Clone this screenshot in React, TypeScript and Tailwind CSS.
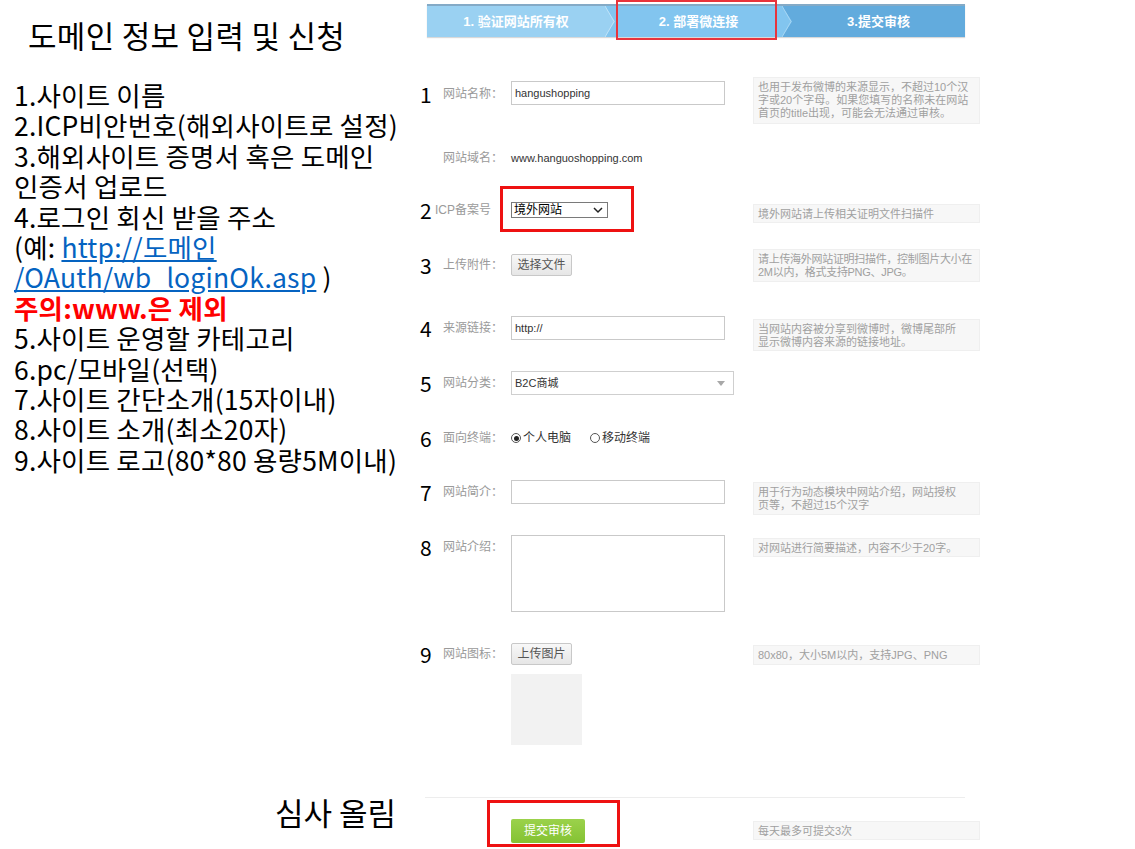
import React from 'react';

const kr = { fontFamily: '"Noto Sans CJK KR", "Noto Sans", sans-serif' };
const cn = { fontFamily: 'Arial, "Liberation Sans", "Noto Sans CJK SC", sans-serif' };

const Hint: React.FC<{ children: React.ReactNode; className?: string }> = ({ children, className = '' }) => (
  <div
    className={`w-[227px] bg-[#f7f7f7] border border-[#efefef] px-[4px] py-[3px] text-[11px] leading-[13px] text-[#a0a0a0] whitespace-nowrap overflow-hidden ${className}`}
    style={cn}
  >
    {children}
  </div>
);

const Label: React.FC<{ num?: string; text: string; h: string; narrow?: boolean }> = ({ num, text, h, narrow }) => (
  <div className={`w-[91px] flex items-center ${h}`}>
    <span className={`${narrow ? 'w-[15px]' : 'w-[23px]'} text-[21px] leading-none text-black`} style={kr}>
      {num}
    </span>
    <span className="text-[12px] text-[#9a9a9a] whitespace-nowrap" style={cn}>
      {text}
    </span>
  </div>
);

const GrayButton: React.FC<{ text: string }> = ({ text }) => (
  <div
    className="w-[61px] h-[22px] flex items-center justify-center rounded-[2px] border border-[#c8c8c8] bg-gradient-to-b from-[#f8f8f8] to-[#e6e6e6] text-[12px] text-[#555]"
    style={cn}
  >
    {text}
  </div>
);

const Steps = () => (
  <div className="relative ml-[7px] mt-[4px] w-[538px] h-[33px] flex border-t-2 border-[#84aac6] shadow-[0_1px_1px_rgba(0,0,0,0.15)] text-white text-[13px] font-semibold" style={cn}>
    <div className="w-[178px] flex items-center justify-center bg-[#9ad1f2]">1. 验证网站所有权</div>
    <svg width="10" height="31" viewBox="0 0 10 31" className="bg-[#82c5ef]">
      <polygon points="0,0 10,15.5 0,31" fill="#9ad1f2" />
      <polyline points="0,0 9,15.5 0,31" fill="none" stroke="#bfe3f8" strokeWidth="1" />
    </svg>
    <div className="w-[167px] flex items-center justify-center bg-[#82c5ef]">2. 部署微连接</div>
    <svg width="10" height="31" viewBox="0 0 10 31" className="bg-[#62abdd]">
      <polygon points="0,0 10,15.5 0,31" fill="#82c5ef" />
      <polyline points="0,0 9,15.5 0,31" fill="none" stroke="#a6d6f3" strokeWidth="1" />
    </svg>
    <div className="flex-1 flex items-center justify-center bg-[#62abdd]">3.提交审核</div>
    <div className="absolute left-[189px] top-[-6px] w-[161px] h-[40px] border-2 border-[#e8343c]" />
  </div>
);

export default function App() {
  const lines: React.ReactNode[] = [
    '1.사이트 이름',
    '2.ICP비안번호(해외사이트로 설정)',
    '3.해외사이트 증명서 혹은 도메인',
    '인증서 업로드',
    '4.로그인 회신 받을 주소',
    <>
      (예: <span className="text-[#0563c1] underline">http://도메인</span>
    </>,
    <>
      <span className="text-[#0563c1] underline">/OAuth/wb_loginOk.asp</span> )
    </>,
    <span className="text-[#ff0000] font-bold">주의:www.은 제외</span>,
    '5.사이트 운영할 카테고리',
    '6.pc/모바일(선택)',
    '7.사이트 간단소개(15자이내)',
    '8.사이트 소개(최소20자)',
    '9.사이트 로고(80*80 용량5M이내)',
  ];

  return (
    <div className="w-[1135px] h-[849px] bg-white flex overflow-hidden">
      {/* left notes */}
      <div className="w-[420px] shrink-0 text-black" style={kr}>
        <div className="pl-[28px] pt-[18px] text-[31px] leading-[34px] tracking-[0.3px]">도메인 정보 입력 및 신청</div>
        <div className="pl-[14px] mt-[28px] text-[26.5px] leading-[30.4px] tracking-[0.2px]">
          {lines.map((l, i) => (
            <div key={i} className="whitespace-nowrap">{l}</div>
          ))}
        </div>
        <div className="pl-[275px] mt-[320px] text-[31px] leading-[34px]">심사 올림</div>
      </div>

      {/* right form */}
      <div className="flex-1 flex flex-col">
        <Steps />

        {/* 1 */}
        <div className="flex items-start mt-[40px] h-[47px]">
          <div className="mt-[5px]"><Label num="1" text="网站名称：" h="h-[24px]" /></div>
          <div className="w-[242px] mt-[4px]">
            <div className="w-[214px] h-[24px] border border-[#c9c9c9] px-[3px] flex items-center text-[11px] text-[#333]" style={cn}>hangushopping</div>
          </div>
          <Hint className="h-[47px]">
            也用于发布微博的来源显示，不超过10个汉<br />字或20个字母。如果您填写的名称未在网站<br />首页的title出现，可能会无法通过审核。
          </Hint>
        </div>

        {/* domain */}
        <div className="flex items-center mt-[22px] h-[24px]">
          <Label text="网站域名：" h="h-[24px]" />
          <div className="text-[11px] text-[#333]" style={cn}>www.hanguoshopping.com</div>
        </div>

        {/* 2 */}
        <div className="flex items-start mt-[32px] h-[20px]">
          <Label num="2" text="ICP备案号" h="h-[16px]" narrow />
          <div className="w-[242px] relative">
            <div className="w-[97px] h-[16px] border border-[#7a7a7a] flex items-center justify-between pl-[2px] pr-[4px] text-[12px] text-black" style={cn}>
              <span>境外网站</span>
              <svg width="10" height="7" viewBox="0 0 10 7"><polyline points="1,1 5,5 9,1" fill="none" stroke="#222" strokeWidth="1.5" /></svg>
            </div>
            <div className="absolute left-[-11px] top-[-16px] w-[134px] h-[46px] border-[3px] border-[#ee1111]" />
          </div>
          <Hint className="h-[19px] mt-[2px]">境外网站请上传相关证明文件扫描件</Hint>
        </div>

        {/* 3 */}
        <div className="flex items-start mt-[27px] h-[33px]">
          <div className="mt-[5px]"><Label num="3" text="上传附件：" h="h-[22px]" /></div>
          <div className="w-[242px] mt-[5px]"><GrayButton text="选择文件" /></div>
          <Hint className="h-[33px] tracking-[-0.3px]">请上传海外网站证明扫描件，控制图片大小在<br />2M以内，格式支持PNG、JPG。</Hint>
        </div>

        {/* 4 */}
        <div className="flex items-start mt-[34px] h-[35px]">
          <Label num="4" text="来源链接：" h="h-[24px]" />
          <div className="w-[242px]">
            <div className="w-[214px] h-[24px] border border-[#c9c9c9] px-[3px] flex items-center text-[11px] text-[#333]" style={cn}>http://</div>
          </div>
          <Hint className="h-[32px] mt-[3px]">当网站内容被分享到微博时，微博尾部所<br />显示微博内容来源的链接地址。</Hint>
        </div>

        {/* 5 */}
        <div className="flex items-start mt-[20px] h-[24px]">
          <Label num="5" text="网站分类：" h="h-[24px]" />
          <div className="w-[223px] h-[24px] border border-[#cfcfcf] flex items-center justify-between pl-[3px] pr-[8px] text-[11px] text-[#333]" style={cn}>
            <span>B2C商城</span>
            <svg width="8" height="5" viewBox="0 0 8 5"><polygon points="0,0 8,0 4,5" fill="#a8a8a8" /></svg>
          </div>
        </div>

        {/* 6 */}
        <div className="flex items-center mt-[33px] h-[20px]">
          <Label num="6" text="面向终端：" h="h-[20px]" />
          <div className="flex items-center text-[12px] text-[#333]" style={cn}>
            <span className="w-[10px] h-[10px] rounded-full border border-[#555] flex items-center justify-center mr-[2px]">
              <span className="w-[5px] h-[5px] rounded-full bg-[#222]" />
            </span>
            个人电脑
            <span className="w-[10px] h-[10px] rounded-full border border-[#555] ml-[19px] mr-[2px]" />
            移动终端
          </div>
        </div>

        {/* 7 */}
        <div className="flex items-start mt-[32px] h-[35px]">
          <Label num="7" text="网站简介：" h="h-[24px]" />
          <div className="w-[242px]">
            <div className="w-[214px] h-[24px] border border-[#c9c9c9]" />
          </div>
          <Hint className="h-[33px] mt-[2px]">用于行为动态模块中网站介绍，网站授权<br />页等，不超过15个汉字</Hint>
        </div>

        {/* 8 */}
        <div className="flex items-start mt-[20px] h-[77px]">
          <Label num="8" text="网站介绍：" h="h-[24px]" />
          <div className="w-[242px]">
            <div className="w-[214px] h-[77px] border border-[#c9c9c9]" />
          </div>
          <Hint className="h-[19px] mt-[3px]">对网站进行简要描述，内容不少于20字。</Hint>
        </div>

        {/* 9 */}
        <div className="flex items-start mt-[31px] h-[102px]">
          <Label num="9" text="网站图标：" h="h-[22px]" />
          <div className="w-[242px] flex flex-col">
            <GrayButton text="上传图片" />
            <div className="w-[71px] h-[71px] bg-[#f2f2f2] mt-[9px]" />
          </div>
          <Hint className="h-[20px] mt-[2px]">80x80，大小5M以内，支持JPG、PNG</Hint>
        </div>

        <div className="ml-[5px] mt-[52px] w-[540px] h-px bg-[#ededed]" />

        {/* submit */}
        <div className="flex items-start mt-[21px] h-[24px]">
          <div className="w-[91px]" />
          <div className="w-[242px] relative">
            <div className="w-[74px] h-[24px] rounded-[2px] bg-gradient-to-b from-[#9bd24b] to-[#84c232] flex items-center justify-center text-[12px] text-white" style={cn}>提交审核</div>
            <div className="absolute left-[-24px] top-[-19px] w-[133px] h-[47px] border-[3px] border-[#ee1111]" />
          </div>
          <Hint className="h-[19px] mt-[2px]">每天最多可提交3次</Hint>
        </div>
      </div>
    </div>
  );
}
